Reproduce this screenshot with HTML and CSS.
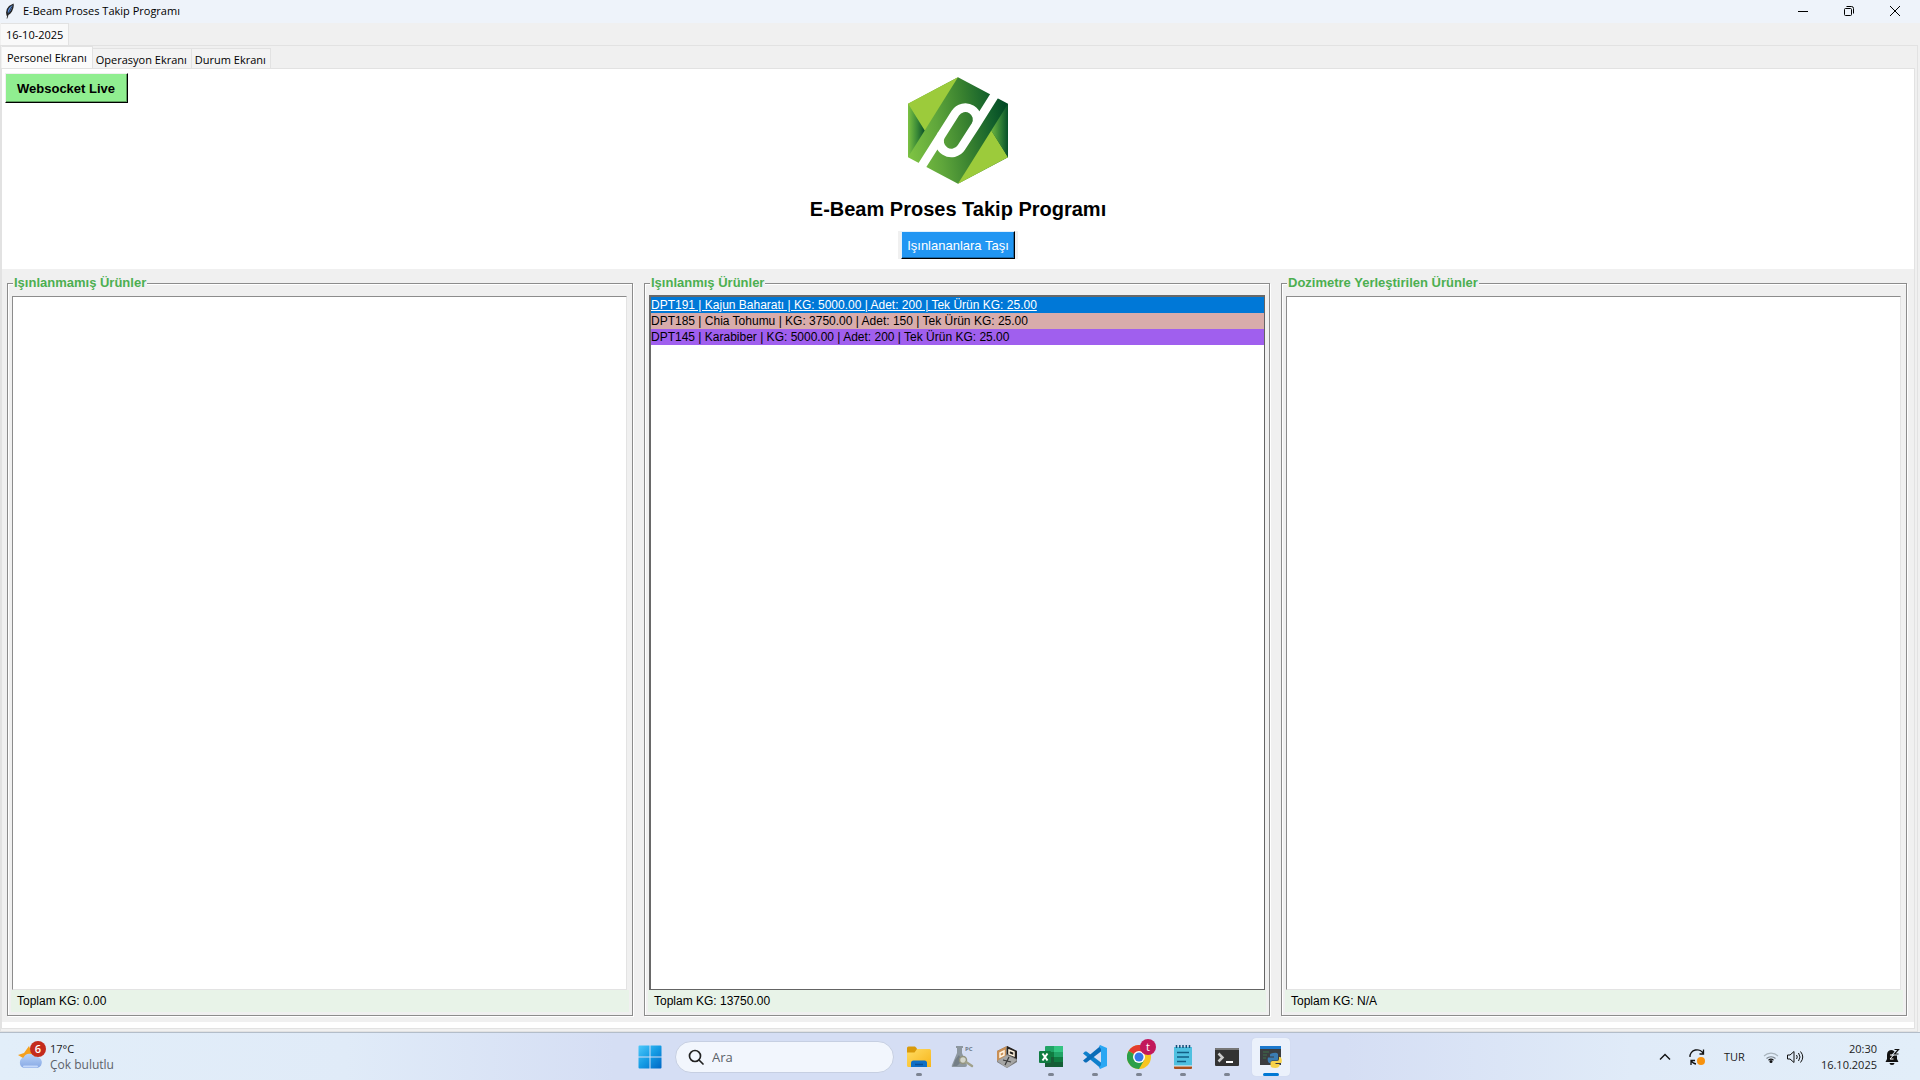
FILE: index.html
```html
<!DOCTYPE html>
<html lang="tr">
<head>
<meta charset="utf-8">
<title>E-Beam Proses Takip Programı</title>
<link rel="stylesheet" href="styles.css">
</head>
<body>
<div class="window">
  <header class="titlebar">
    <svg class="feather" viewBox="0 0 10 16" width="10" height="16" aria-hidden="true"><path d="M2.500 14.500 Q-1 8 4 3 L8.500 .5 Q9.500 4 7 8.500 L5 11 L3 12z" fill="#222"/><path d="M3 11 Q2 7 5 4 L7.500 2 Q7.500 5 5.500 8z" fill="#5d95e6"/><path d="M2 15.500 Q3 9 7 3.500" fill="none" stroke="#222" stroke-width=".8"/></svg>
    <span class="caption">E-Beam Proses Takip Programı</span>
    <div class="window-buttons">
      <button type="button" aria-label="Simge durumuna küçült"><svg viewBox="0 0 12 12" width="12" height="12"><path d="M1 6.500h10" stroke="#000"/></svg></button>
      <button type="button" aria-label="Önceki boyut"><svg viewBox="0 0 12 12" width="12" height="12" fill="none" stroke="#000"><rect x="1.500" y="3.500" width="7" height="7" rx="1"/><path d="M3.500 1.500H8.500Q10.500 1.500 10.500 3.500V8.500"/></svg></button>
      <button type="button" aria-label="Kapat"><svg viewBox="0 0 12 12" width="12" height="12"><path d="M1 1l10 10M11 1L1 11" stroke="#000"/></svg></button>
    </div>
  </header>

  <nav class="tabs outer-tabs" role="tablist">
    <button class="tab date-tab" type="button" role="tab" aria-selected="true">16-10-2025</button>
  </nav>

  <div class="outer-pane">
    <nav class="tabs inner-tabs" role="tablist">
      <button class="tab selected" type="button" role="tab" aria-selected="true">Personel Ekranı</button>
      <button class="tab" type="button" role="tab">Operasyon Ekranı</button>
      <button class="tab" type="button" role="tab">Durum Ekranı</button>
    </nav>

    <main class="inner-pane">
      <section class="hero">
        <button class="raised live" type="button">Websocket Live</button>
        <div class="brand">
          <svg class="logo" viewBox="384 51 300 320" width="100" height="107" role="img" aria-label="Logo">
            <defs>
              <linearGradient id="band" gradientUnits="userSpaceOnUse" x1="384" y1="230" x2="684" y2="190"><stop offset="0" stop-color="#7dc242"/><stop offset=".3" stop-color="#5fa63b"/><stop offset=".6" stop-color="#37802f"/><stop offset=".85" stop-color="#13602c"/><stop offset="1" stop-color="#024a25"/></linearGradient>
              <linearGradient id="sideLeft"><stop offset="0" stop-color="#7dc242"/><stop offset=".5" stop-color="#3f8f38"/><stop offset="1" stop-color="#0a5029"/></linearGradient>
              <linearGradient id="sideRight"><stop offset="0" stop-color="#6db53f"/><stop offset=".6" stop-color="#2c7c35"/><stop offset="1" stop-color="#075029"/></linearGradient>
            </defs>
            <path d="M534 51L684 131V291L534 371L384 291V131z" fill="url(#band)"/>
            <path d="M384 131L534 51L434 211z" fill="#9ccb3b"/>
            <path d="M384 131L434 211L384 291z" fill="url(#sideLeft)"/>
            <path d="M684 291L534 371L634 211z" fill="#9ccb3b"/>
            <path d="M684 131V291L634 211z" fill="url(#sideRight)"/>
            <path d="M420 326L526 159A35.500 35.500 0 0 1 586 197L544 262A35.500 35.500 0 0 1 484 224M586 197L652 92" fill="none" stroke="#fff" stroke-width="26"/>
          </svg>
          <h1>E-Beam Proses Takip Programı</h1>
          <div class="action-frame"><button class="raised move" type="button">Işınlananlara Taşı</button></div>
        </div>
      </section>

      <section class="panels">
        <fieldset class="panel">
          <legend>Işınlanmamış Ürünler</legend>
          <ul class="list" role="listbox" aria-label="Işınlanmamış Ürünler"></ul>
          <p class="total">Toplam KG: 0.00</p>
        </fieldset>
        <fieldset class="panel">
          <legend>Işınlanmış Ürünler</legend>
          <ul class="list focused" role="listbox" aria-label="Işınlanmış Ürünler">
            <li class="row active" role="option" aria-selected="true">DPT191 | Kajun Baharatı | KG: 5000.00 | Adet: 200 | Tek Ürün KG: 25.00</li>
            <li class="row rose" role="option">DPT185 | Chia Tohumu | KG: 3750.00 | Adet: 150 | Tek Ürün KG: 25.00</li>
            <li class="row violet" role="option">DPT145 | Karabiber | KG: 5000.00 | Adet: 200 | Tek Ürün KG: 25.00</li>
          </ul>
          <p class="total">Toplam KG: 13750.00</p>
        </fieldset>
        <fieldset class="panel">
          <legend>Dozimetre Yerleştirilen Ürünler</legend>
          <ul class="list" role="listbox" aria-label="Dozimetre Yerleştirilen Ürünler"></ul>
          <p class="total">Toplam KG: N/A</p>
        </fieldset>
      </section>
    </main>
  </div>

  <footer class="taskbar">
    <button class="weather" type="button">
      <span class="weather-icon">
        <svg viewBox="0 0 26 28" width="26" height="28" aria-hidden="true"><defs><linearGradient id="cloud" x2="0" y2="1"><stop offset="0" stop-color="#b9d3f8"/><stop offset="1" stop-color="#86a8e4"/></linearGradient></defs><path d="M11 5l2 5 5 0-1 10H4L5 17 0 14l6-2z" fill="#f5a01d"/><path d="M6 27a5.500 5.500 0 0 1-.5-10.500A6.500 6.500 0 0 1 17 16a5.500 5.500 0 0 1 2.500 11z" fill="url(#cloud)"/><path d="M6 25.500h13" stroke="#c3d8fa" stroke-width="2" stroke-linecap="round"/></svg>
        <span class="count">6</span>
      </span>
      <span class="weather-text"><span>17°C</span><span class="muted">Çok bulutlu</span></span>
    </button>

    <div class="apps">
      <button class="app" type="button" aria-label="Başlat"><svg viewBox="0 0 24 24" width="24" height="24"><defs><linearGradient id="win" x2="1" y2="1"><stop offset="0" stop-color="#4cc8fa"/><stop offset=".5" stop-color="#149be4"/><stop offset="1" stop-color="#0067c5"/></linearGradient></defs><path d="M1.500 .5H11.500V11.500H.5V1.500Q.5 .5 1.500 .5zM12.500 .5H22.500Q23.500 .5 23.500 1.500V11.500H12.500zM.5 12.500H11.500V23.500H1.500Q.5 23.500 .5 22.500zM12.500 12.500H23.500V22.500Q23.500 23.500 22.500 23.500H12.500z" fill="url(#win)"/></svg></button>
      <label class="search"><svg viewBox="0 0 16 16" width="16" height="16" fill="none" stroke="#222" stroke-width="1.700"><circle cx="7" cy="7" r="5.500"/><path d="M11 11l4 4" stroke-linecap="round"/></svg><input type="text" placeholder="Ara" aria-label="Ara"></label>
      <button class="app open" type="button" aria-label="Dosya Gezgini"><svg viewBox="0 0 24 24" width="24" height="24"><defs><linearGradient id="fold" x2="1" y2="1"><stop offset="0" stop-color="#ffdc63"/><stop offset="1" stop-color="#f7b51a"/></linearGradient></defs><path d="M0 3Q0 1.500 1.500 1.500H8L10 3.500V8H0z" fill="#d99a0b"/><path d="M0 7.500H7.500L10 4H22.500Q24 4 24 5.500V22H1.500Q0 22 0 20.500z" fill="url(#fold)"/><path d="M4 22V18Q4 15.500 6.500 15.500H17.500Q20 15.500 20 18V22z" fill="#0f6fc6"/><path d="M8 19.500h8" stroke="#0a4f96" stroke-width="1.500"/></svg></button>
      <button class="app" type="button" aria-label="PC Test"><svg viewBox="0 0 24 24" width="24" height="24"><path d="M5 1h7v2h-1v5l5 12q0 2-2 2H2q-2 0-1-2L6 8V3H5z" fill="#8d979f"/><path d="M4 15l4-5 3 6-5 5H2z" fill="#747e86"/><circle cx="12" cy="15" r="3.500" fill="#d4d6cc" stroke="#92937f" stroke-width="1.500"/><path d="M15 17l6 4" stroke="#a0a18b" stroke-width="2.500" stroke-linecap="round"/><text x="14" y="6" class="tiny">PC</text></svg></button>
      <button class="app" type="button" aria-label="Küp"><svg viewBox="0 0 24 24" width="24" height="24"><path d="M12 1L2 6V17L12 23L22 17V6z" fill="#777"/><path d="M12 1L2 6V16L11 11V3z" fill="#c98f55"/><path d="M12 1L22 6V14L12 9z" fill="#26221f"/><path d="M2 16L12 10L22 15L12 23z" fill="#a6a6a5"/><path d="M5 8l4-2v4l-4 2zM14 5l5 2v4l-5-2z" fill="none" stroke="#fff3df" stroke-width="1.500"/><path d="M8 15l8 2M14 12l-4 8" stroke="#393939" stroke-width="1.200"/></svg></button>
      <button class="app open" type="button" aria-label="Excel"><svg viewBox="0 0 24 24" width="24" height="24"><path d="M7 1H23Q24 1 24 2V22H6V2Q6 1 7 1z" fill="#21a366"/><path d="M15 1H23Q24 1 24 2V7H15z" fill="#33c481"/><path d="M6 7h9v5H6z" fill="#107c41"/><path d="M6 12h9v10H6z" fill="#185c37"/><path d="M15 12h9v5h-9z" fill="#107c41"/><path d="M15 17h9v5h-9z" fill="#135f36"/><rect y="6" width="12" height="12" rx="1" fill="#107c41"/><path d="M3.500 8.500l5 7M8.500 8.500l-5 7" stroke="#fff" stroke-width="2"/></svg></button>
      <button class="app open" type="button" aria-label="Visual Studio Code"><svg viewBox="0 0 24 24" width="24" height="24"><path d="M0 8.500L2 6.500L3.500 6.500L18 17.500V23.500z" fill="#0f80cc"/><path d="M0 15.500L2 17.500L3.500 17.500L18 6.500V.5z" fill="#0a6cb8"/><path d="M17 0L24 3V21L17 24L16 22.500L18 20V4L16 1.500z" fill="#2aa7f3"/></svg></button>
      <button class="app open" type="button" aria-label="Chrome"><svg viewBox="0 0 24 24" width="24" height="24"><circle cx="12" cy="12" r="12" fill="#f7c520"/><path d="M12 12L1.600 6A12 12 0 0 1 22.400 6z" fill="#e33b2e"/><path d="M12 12L1.600 6A12 12 0 0 0 12 24L17.200 15z" fill="#2b9f4a"/><circle cx="12" cy="12" r="6" fill="#fff"/><circle cx="12" cy="12" r="4.500" fill="#3477e8"/></svg><span class="profile">t</span></button>
      <button class="app open" type="button" aria-label="Not Defteri"><svg viewBox="0 0 24 24" width="24" height="24"><path d="M3 2H21V22H3z" fill="#4fc0e0"/><path d="M3 21H21V23Q21 24 20 24H4Q3 24 3 23z" fill="#a9501c"/><path d="M3 20.500h18v1H3z" fill="#f3f3f3"/><path d="M5.500 0v3M8.800 0v3M12 0v3M15.300 0v3M18.500 0v3" stroke="#174f77" stroke-width="1.500"/><path d="M6 7.500h12M6 12h12M6 16.500h9" stroke="#125e84" stroke-width="1.500"/></svg></button>
      <button class="app open" type="button" aria-label="Terminal"><svg viewBox="0 0 24 24" width="24" height="24"><rect y="3" width="24" height="18" rx="1" fill="#333"/><path d="M1 3h22q1 0 1 1v1H0V4q0-1 1-1z" fill="#777"/><path d="M3.500 8.500L7.500 12.500L3.500 16.500" fill="none" stroke="#ccc" stroke-width="2.500"/><path d="M11 17h7" stroke="#fff" stroke-width="2"/></svg></button>
      <button class="app open current" type="button" aria-label="Python"><svg viewBox="0 0 24 24" width="24" height="24"><path d="M1 1H22V20H1z" fill="#3b3d40"/><path d="M1 1H22V4H1z" fill="#1b78cd"/><path d="M4 7h6M4 10h4M4 13h3" stroke="#3f7349"/><path d="M14 8q4-1 5 1v5q0 1.500-1.500 1.500H13q-1.500 0-1.500 2.500H10Q8 16 9 12.500h6v-1h-4V9.500Q12 8 14 8z" fill="#3b7cb2"/><path d="M20 12h1.500q2 2 1 6h-6v1h4v2q-1 2-4 2-5 0-5-2.500V18q0-2 2-2h4.500Q20 16 20 14z" fill="#f7d24a"/></svg></button>
    </div>

    <div class="tray">
      <button class="icon-button" type="button" aria-label="Gizli simgeler"><svg viewBox="0 0 12 12" width="12" height="12"><path d="M1 8.500L6 3.500l5 5" fill="none" stroke="#111" stroke-width="1.400"/></svg></button>
      <button class="icon-button sync" type="button" aria-label="Güncelleme"><svg viewBox="0 0 18 18" width="18" height="18"><path d="M2 9A7 6.500 0 0 1 15.500 6M15.500 1.500V6H11.500M3 17V12.500H7M3 12.500Q4.500 15.500 8 16" fill="none" stroke="#111" stroke-width="1.300"/><circle cx="13" cy="13" r="4" fill="#f7920e"/></svg></button>
      <span class="lang">TUR</span>
      <button class="icon-button network" type="button" aria-label="Ağ ve ses"><svg viewBox="0 0 16 16" width="16" height="16" fill="none"><path d="M1 7a10 10 0 0 1 14 0" stroke="#a9b4bd" stroke-width="1.100"/><path d="M3.500 9.500a6.500 6.500 0 0 1 9 0" stroke="#7b858e" stroke-width="1.100"/><path d="M5.500 11.200a4 4 0 0 1 5 0" stroke="#111" stroke-width="1.200"/><circle cx="8" cy="12.500" r="1.500" fill="#111"/></svg><svg viewBox="0 0 18 16" width="18" height="16" fill="none" stroke="#111"><path d="M1.500 6H4L8 2.500V13.500L4 10H1.500z"/><path d="M10.500 6q1.500 2 0 4M12.500 4q3 4 0 8M14.500 2.500q4.500 5.500 0 11"/></svg></button>
      <time class="clock" datetime="2025-10-16T20:30"><span>20:30</span><span>16.10.2025</span></time>
      <button class="icon-button bell" type="button" aria-label="Bildirimler"><svg viewBox="0 0 16 18" width="16" height="18"><path d="M7 2Q2 2 2 7V11L.5 14H13.500L12 11V7L9 3zM4.500 15h5q0 2-2.500 2t-2.500-2z" fill="#111"/><path d="M5 7h3.500l-3.500 4h3.500" fill="none" stroke="#fff"/><path d="M9.500 1.500H13.500L9.500 6H13.500" fill="none" stroke="#e2eef9" stroke-width="3"/><path d="M9.500 1.500H13.500L9.500 6H13.500" fill="none" stroke="#111" stroke-width="1.200"/></svg></button>
    </div>
  </footer>
</div>
</body>
</html>
```
FILE: styles.css
```css
* { box-sizing: border-box; }
body {
  margin: 0;
  background: #f0f0f0;
  color: #000;
  font-family: "Liberation Sans", Arial, sans-serif;
  font-size: 12px;
}
button, input { font: inherit; color: inherit; }
button { margin: 0; padding: 0; border: 0; background: none; }
svg { display: block; }
.window { display: flex; flex-direction: column; min-height: 100vh; }

.titlebar, .tabs, .taskbar { font-family: "Open Sans", "Noto Sans", sans-serif; font-size: 11px; }
.titlebar { display: flex; align-items: center; height: 23px; padding: 0 0 1px 5px; background: #eef3fa; }
.caption { margin-left: 8px; line-height: 16px; }
.window-buttons { display: flex; height: 20px; margin-left: auto; }
.window-buttons button { display: grid; place-items: center; width: 46px; padding-right: 4px; }

.tabs { display: flex; align-items: flex-end; height: 22px; }
.tab { height: 20px; padding: 2px 4px 0 3px; border: 1px solid #e2e2e2; border-bottom: 0; border-left: 0; background: #f3f3f3; line-height: 16px; white-space: nowrap; }
.outer-tabs { padding-left: 1px; }
.date-tab { height: 22px; padding: 0 5px; background: #f9f9f9; }
.inner-tabs { padding-left: 1px; }
.tab.selected { height: 22px; padding: 0 5px; background: #fbfbfb; }

.outer-pane { display: flex; flex: 1; flex-direction: column; margin-right: 2px; border: 1px solid #e2e2e2; }
.inner-pane { display: flex; flex: 1; flex-direction: column; margin: 0 2px 2px 0; padding-bottom: 6px; border: 1px solid #e2e2e2; background: #fff; }

.hero { display: grid; grid-template-columns: 1fr auto 1fr; align-items: start; justify-items: start; padding: 4px 3px 10px; }
.raised { border: 1px solid; border-color: #f0f0f0 #000 #000 #f0f0f0; }
.live { height: 30px; padding: 0 12px 0 11px; background: #90ee90; box-shadow: inset -1px -1px 0 #5e9e5e; font-size: 13px; font-weight: 700; }
.brand { display: flex; flex-direction: column; align-items: center; padding-top: 4px; }
h1 { margin: 13px 0 10px; font-size: 20px; line-height: 24px; }
.action-frame { padding: 0 3px; background: #f0f0f0; }
.move { height: 28px; padding: 0 5px; border-color: #e3f1fd #000 #000 #e3f1fd; background: #2196f3; box-shadow: inset -1px -1px 0 #1769aa; color: #fff; font-size: 13px; }

.panels { display: grid; flex: 1; grid-template-columns: repeat(3, minmax(0, 1fr)); gap: 11px; padding: 6px 7px 6px 5px; background: #f0f0f0; }
.panel { display: flex; flex-direction: column; min-width: 0; margin: 0; padding: 3px; border: 1px solid #8c8c8c; box-shadow: 1px 1px 0 #fff, inset 1px 1px 0 #fff; }
legend { margin-left: 2px; padding: 0 1px; background: #f0f0f0; color: #4caf50; font-size: 13px; font-weight: 700; line-height: 16px; }
.list { flex: 1; margin: 2px 2px 0 1px; padding: 0; border: 1px solid; border-color: #8c8c8c #e3e3e3 #e3e3e3 #8c8c8c; background: #fff; list-style: none; }
.list.focused { margin: 1px 1px 0; border: 2px solid #696969; border-right: 1px solid #646464; border-bottom: 1px solid #646464; }
.row { height: 16px; line-height: 16px; white-space: nowrap; }
.active { background: #0078d7; color: #fff; text-decoration: underline; }
.rose { background: #d8acab; }
.violet { background: #a05fee; }
.total { margin: 0; padding: 0 6px; background: #e8f3e8; line-height: 22px; }

.taskbar { display: grid; grid-template-columns: 1fr auto 1fr; align-items: center; height: 48px; border-top: 1px solid #b3bdc9; background: linear-gradient(90deg, #e2eef9, #e0ebf8 18%, #d5def4 32%, #d5def4 70%, #e0ebf8 85%, #e2eef9); color: #1b1b1b; }
.weather { display: flex; justify-self: start; margin-left: 18px; text-align: left; }
.weather-icon { position: relative; }
.count { position: absolute; top: 0; left: 12px; width: 16px; height: 16px; border-radius: 50%; background: #c42b1c; color: #fff; font-size: 11px; font-weight: 600; line-height: 16px; text-align: center; }
.weather-text, .clock { display: flex; flex-direction: column; line-height: 16px; }
.weather-text { margin-left: 6px; }
.muted { color: #5c6269; font-size: 12px; }
.apps { display: flex; align-items: center; gap: 6px; padding-left: 1px; }
.app { position: relative; display: grid; place-items: center; width: 38px; height: 38px; border-radius: 4px; }
.open::after { content: ""; position: absolute; bottom: 0; left: 16px; width: 6px; height: 3px; border-radius: 2px; background: #7d8492; }
.current { background: #ebf1fb; box-shadow: 0 0 1px #bcc6da; }
.current::after { left: 11px; width: 16px; background: #0078d4; }
.search { display: flex; align-items: center; width: 219px; height: 32px; padding: 0 12px; border: 1px solid #c6cfe2; border-radius: 16px; background: #f2f6fd; }
.search input { flex: 1; min-width: 0; margin-left: 8px; padding: 0; border: 0; outline: 0; background: none; font-size: 13px; }
.search input::placeholder { color: #5c6269; opacity: 1; }
.profile { position: absolute; top: 1px; right: 2px; width: 16px; height: 16px; border-radius: 50%; background: #c2185b; color: #fff; line-height: 16px; }
.tiny { fill: #6d7a88; font-size: 6px; font-weight: 700; }
.tray { display: flex; align-items: center; justify-self: end; padding-right: 19px; }
.sync { margin: 0 18px 0 17px; }
.network { display: flex; gap: 7px; margin-left: 18px; }
.clock { margin: 0 8px 0 17px; text-align: right; }
```
